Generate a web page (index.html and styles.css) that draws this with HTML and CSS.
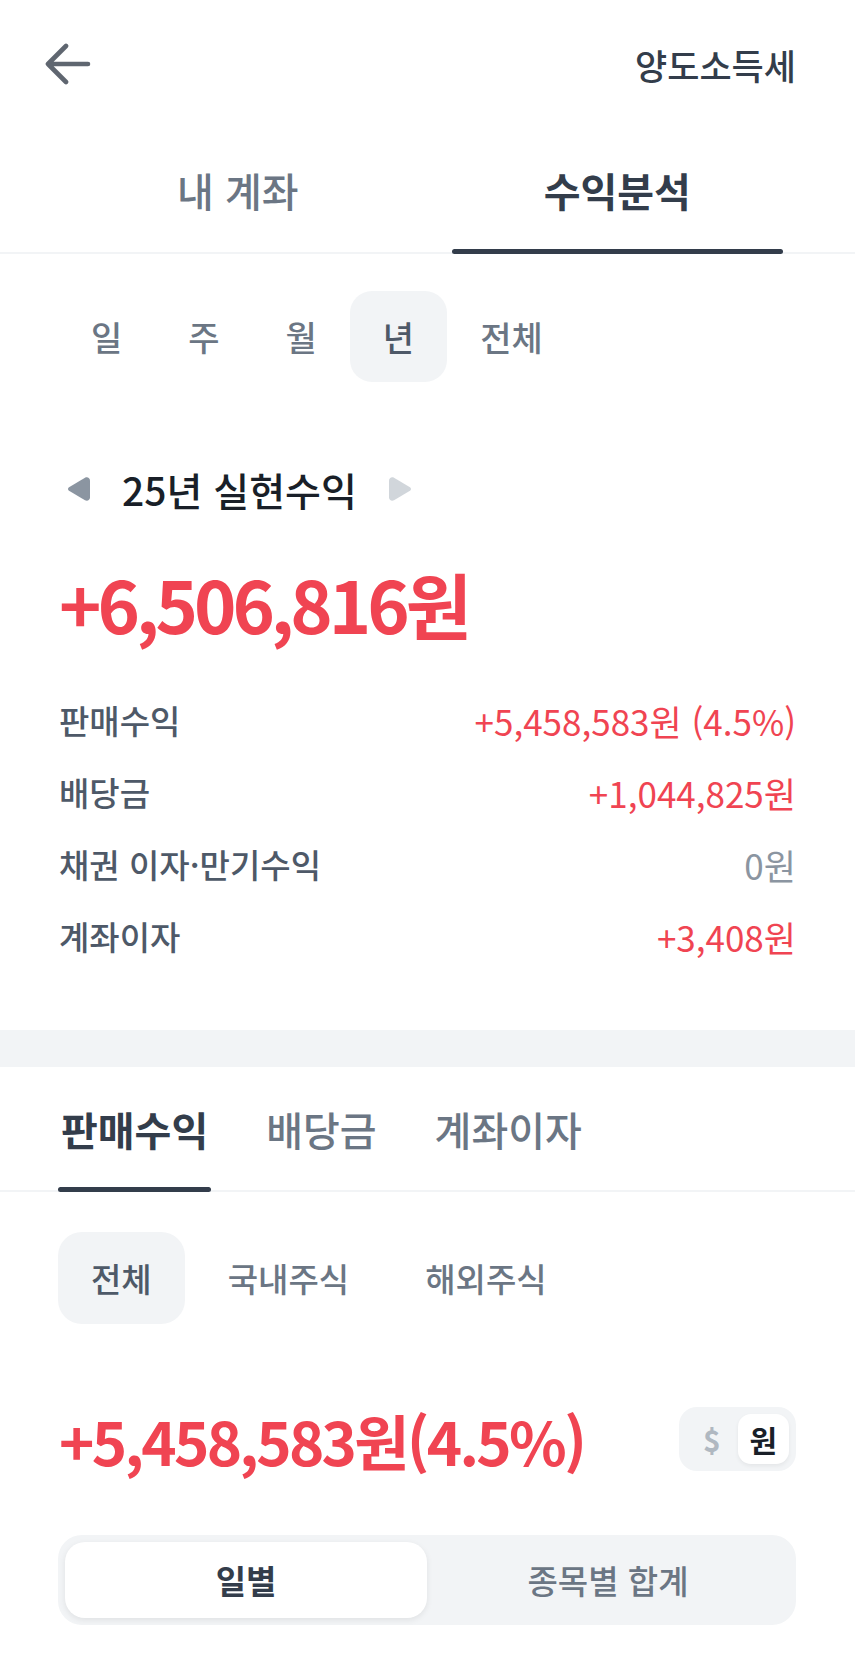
FILE: index.html
```html
<!DOCTYPE html>
<html lang="ko">
<head>
<meta charset="utf-8">
<title>수익분석</title>
<link rel="stylesheet" href="styles.css">
</head>
<body>
<div class="app">
  <header class="header">
    <svg class="back" width="48" height="42" viewBox="0 0 48 42" aria-hidden="true">
      <path d="M45 21H5M23 3L5 21L23 39" fill="none" stroke="#5f6670" stroke-width="4.6" stroke-linecap="round" stroke-linejoin="round"/>
    </svg>
    <div class="header-title">양도소득세</div>
  </header>

  <nav class="main-tabs-wrap">
    <div class="main-tabs">
      <div class="main-tab">내 계좌</div>
      <div class="main-tab active">수익분석</div>
    </div>
  </nav>

  <div class="period">
    <div class="period-item">일</div>
    <div class="period-item">주</div>
    <div class="period-item">월</div>
    <div class="period-item active">년</div>
    <div class="period-item">전체</div>
  </div>

  <section class="summary">
    <div class="summary-title">
      <svg class="tri" width="27" height="28" viewBox="0 0 27 28" aria-hidden="true">
        <path d="M4 12.3L20 2.8C22.3 1.5 25 3 25 5.6V22.4C25 25 22.3 26.5 20 25.2L4 15.7C2.7 14.9 2.7 13.1 4 12.3Z" fill="#8b95a1"/>
      </svg>
      <span class="summary-label">25년 실현수익</span>
      <svg class="tri" width="27" height="28" viewBox="0 0 27 28" aria-hidden="true">
        <path d="M23 12.3L7 2.8C4.7 1.5 2 3 2 5.6V22.4C2 25 4.7 26.5 7 25.2L23 15.7C24.3 14.9 24.3 13.1 23 12.3Z" fill="#d1d6db"/>
      </svg>
    </div>
    <div class="big-amount">+6,506,816원</div>
    <div class="rows">
      <div class="row"><span class="row-label">판매수익</span><span class="row-value red">+5,458,583원 (4.5%)</span></div>
      <div class="row"><span class="row-label">배당금</span><span class="row-value red">+1,044,825원</span></div>
      <div class="row"><span class="row-label">채권 이자·만기수익</span><span class="row-value gray">0원</span></div>
      <div class="row"><span class="row-label">계좌이자</span><span class="row-value red">+3,408원</span></div>
    </div>
  </section>

  <div class="band"></div>

  <nav class="sub-tabs-wrap">
    <div class="sub-tabs">
      <div class="sub-tab active">판매수익</div>
      <div class="sub-tab">배당금</div>
      <div class="sub-tab">계좌이자</div>
    </div>
  </nav>

  <div class="chips">
    <div class="chip active">전체</div>
    <div class="chip">국내주식</div>
    <div class="chip">해외주식</div>
  </div>

  <div class="amount-row">
    <div class="amount">+5,458,583원(4.5%)</div>
    <div class="currency">
      <span class="cur-opt">$</span>
      <span class="cur-opt active">원</span>
    </div>
  </div>

  <div class="segment">
    <div class="seg-btn active">일별</div>
    <div class="seg-btn">종목별 합계</div>
  </div>
</div>
</body>
</html>
```

FILE: styles.css
```css
* { box-sizing: border-box; }
html, body { margin: 0; padding: 0; background: #fff; }
body {
  font-family: "Noto Sans CJK KR", "Noto Sans", sans-serif;
  color: #191f28;
}
.app { width: 855px; }

.header {
  height: 128px;
  display: flex;
  align-items: center;
  justify-content: space-between;
  padding: 0 59px 0 43px;
}
.back { display: block; }
.header-title {
  font-size: 35px;
  font-weight: 500;
  color: #333d4b;
}

.main-tabs-wrap { border-bottom: 2px solid #f2f4f6; }
.main-tabs { display: flex; padding: 0 48px; }
.main-tab {
  flex: 1;
  height: 124px;
  display: flex;
  align-items: center;
  justify-content: center;
  font-size: 40px;
  font-weight: 500;
  color: #6b7684;
  position: relative;
}
.main-tab.active { color: #333d4b; font-weight: 700; }
.main-tab.active::after {
  content: "";
  position: absolute;
  left: 24px;
  right: 24px;
  bottom: -2px;
  height: 5px;
  border-radius: 3px;
  background: #333d4b;
}

.period { display: flex; padding: 37px 0 0 58px; }
.period-item {
  height: 91px;
  padding: 0 33px;
  display: flex;
  align-items: center;
  font-size: 34px;
  font-weight: 500;
  color: #6b7684;
  border-radius: 22px;
}
.period-item.active { background: #f2f4f6; color: #4e5968; }

.summary { padding: 87px 59px 0 59px; }
.summary-title {
  height: 40px;
  display: flex;
  align-items: center;
  gap: 30px;
  padding-left: 6px;
}
.tri { display: block; }
.summary-label {
  font-size: 39px;
  font-weight: 500;
  color: #191f28;
}
.big-amount {
  margin-top: 46px;
  height: 96px;
  line-height: 96px;
  font-size: 72px;
  font-weight: 700;
  color: #f04452;
  letter-spacing: -4px;
}
.rows { margin-top: 33px; }
.row {
  height: 72px;
  display: flex;
  align-items: center;
  justify-content: space-between;
}
.row-label { color: #4e5968; font-weight: 500; font-size: 33px; }
.row-value { font-size: 35px; }
.row-value.red { color: #f04452; }
.row-value.gray { color: #8b95a1; }

.band { margin-top: 58px; height: 37px; background: #f2f4f6; }

.sub-tabs-wrap { border-bottom: 2px solid #f2f4f6; }
.sub-tabs { display: flex; gap: 52px; padding-left: 58px; }
.sub-tab {
  height: 123px;
  padding: 0 3px;
  display: flex;
  align-items: center;
  font-size: 40px;
  font-weight: 500;
  color: #6b7684;
  position: relative;
}
.sub-tab.active { color: #333d4b; font-weight: 700; }
.sub-tab.active::after {
  content: "";
  position: absolute;
  left: 0;
  right: 0;
  bottom: -2px;
  height: 5px;
  border-radius: 3px;
  background: #333d4b;
}

.chips { display: flex; gap: 10px; padding: 40px 0 0 58px; }
.chip {
  height: 92px;
  padding: 0 33px;
  display: flex;
  align-items: center;
  font-size: 33px;
  font-weight: 500;
  color: #6b7684;
  border-radius: 24px;
}
.chip.active { background: #f2f4f6; color: #4e5968; }

.amount-row {
  margin-top: 83px;
  height: 64px;
  padding: 0 59px;
  display: flex;
  align-items: center;
  justify-content: space-between;
}
.amount {
  font-size: 60px;
  font-weight: 700;
  color: #f04452;
  letter-spacing: -2.7px;
}
.currency {
  width: 117px;
  height: 64px;
  padding: 7px;
  border-radius: 18px;
  background: #f2f4f6;
  display: flex;
  align-items: center;
}
.cur-opt {
  flex: 1;
  height: 50px;
  display: flex;
  align-items: center;
  justify-content: center;
  font-size: 30px;
  font-weight: 700;
  color: #b0b8c1;
  border-radius: 13px;
}
.cur-opt.active {
  background: #fff;
  color: #191f28;
  box-shadow: 0 2px 4px rgba(0,0,0,0.06);
}

.segment {
  margin: 64px 59px 0 58px;
  height: 90px;
  padding: 7px;
  border-radius: 24px;
  background: #f2f4f6;
  display: flex;
}
.seg-btn {
  flex: 1;
  display: flex;
  align-items: center;
  justify-content: center;
  font-size: 33px;
  font-weight: 500;
  color: #6b7684;
  border-radius: 20px;
}
.seg-btn.active {
  background: #fff;
  color: #333d4b;
  font-weight: 600;
  box-shadow: 0 2px 6px rgba(0,0,0,0.08);
}
```
